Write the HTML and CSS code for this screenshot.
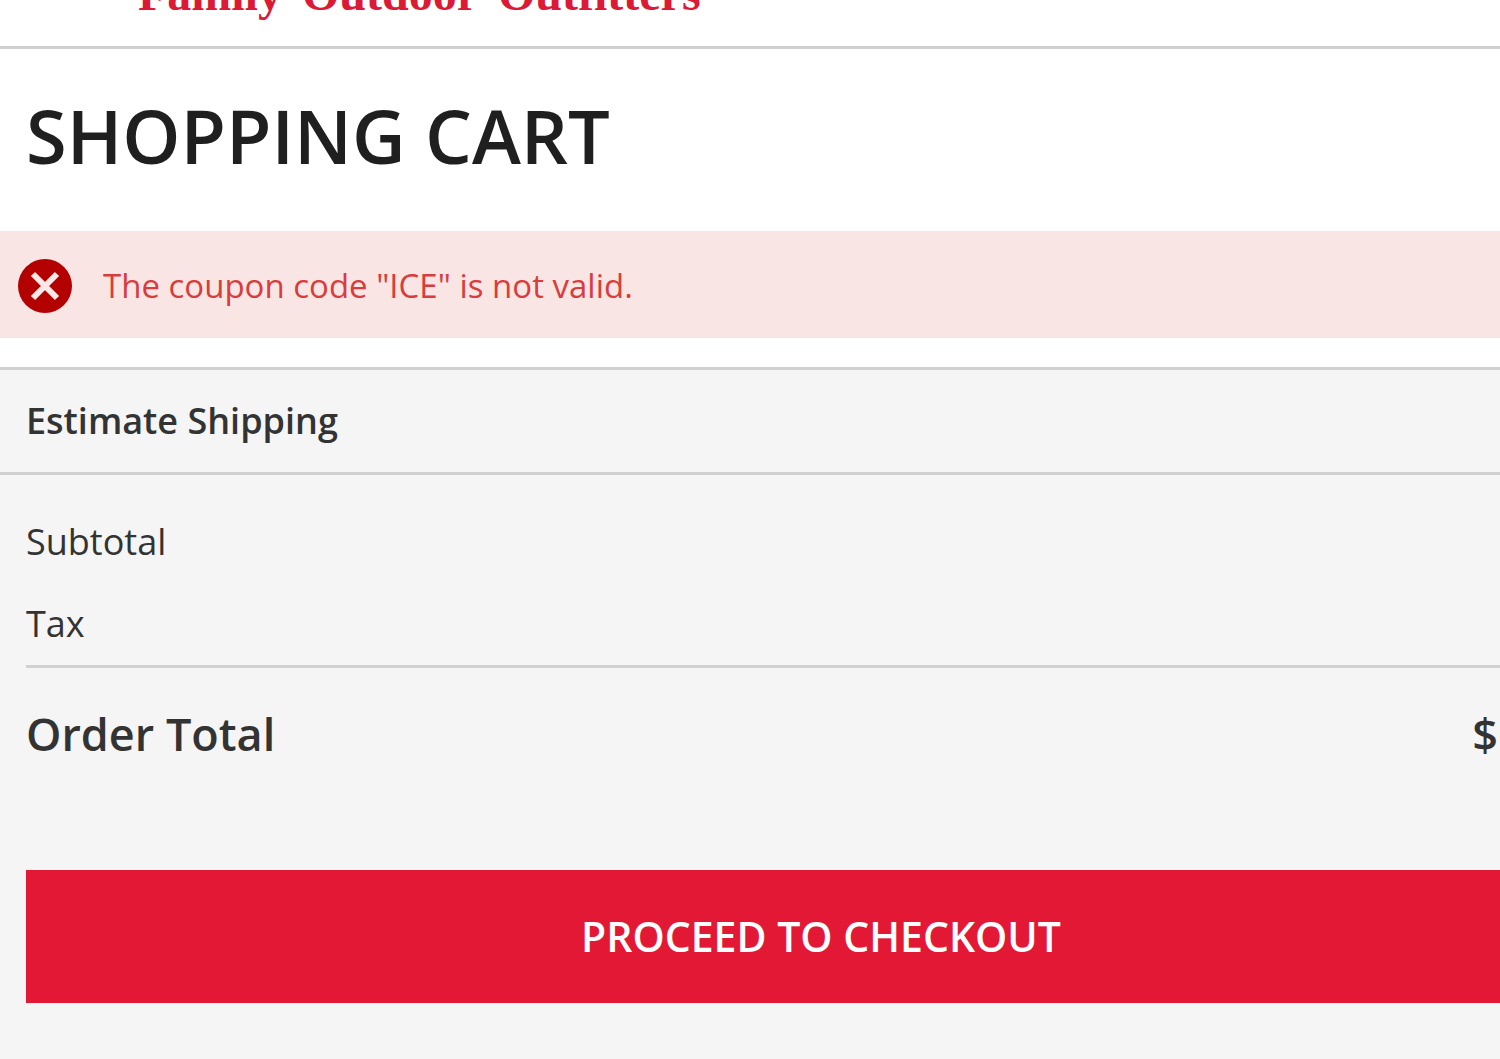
FILE: index.html
```html
<!DOCTYPE html>
<html lang="en">
<head>
<meta charset="utf-8">
<meta name="viewport" content="width=device-width, initial-scale=1">
<title>Shopping Cart</title>
<link rel="stylesheet" href="styles.css">
</head>
<body>
<header class="site-header">
  <a class="brand" href="#"><span>Family</span> <span>Outdoor</span> <span>Outfitters</span></a>
</header>
<main>
  <h1 class="page-title">SHOPPING CART</h1>
  <div class="message" role="alert">
    <svg class="message-icon" viewBox="0 0 54 54" aria-hidden="true">
      <circle cx="27" cy="27" r="27" fill="#b30000"/>
      <path d="M15 15L39 39M39 15L15 39" stroke="#fbe8e7" stroke-width="6" fill="none"/>
    </svg>
    <p class="message-text">The coupon code "ICE" is not valid.</p>
  </div>
  <section class="summary">
    <h2 class="summary-heading">Estimate Shipping</h2>
    <div class="summary-body">
      <table class="totals">
        <tbody>
          <tr><th scope="row">Subtotal</th><td></td></tr>
          <tr><th scope="row">Tax</th><td></td></tr>
        </tbody>
        <tfoot>
          <tr><th scope="row">Order Total</th><td>$</td></tr>
        </tfoot>
      </table>
      <button class="checkout" type="button">PROCEED TO CHECKOUT</button>
    </div>
  </section>
</main>
</body>
</html>
```
FILE: styles.css
```css
* {
  box-sizing: border-box;
}

body {
  margin: 0;
  min-height: 100vh;
  display: flex;
  flex-direction: column;
  background: #fff;
  color: #333;
  font-family: "Open Sans", "Noto Sans", sans-serif;
}

main {
  flex: 1;
  display: flex;
  flex-direction: column;
}

.site-header {
  display: flex;
  align-items: flex-end;
  height: 49px;
  padding: 0 26px 28px 138px;
  border-bottom: 3px solid #d0d0d0;
  overflow: hidden;
}

.brand {
  display: flex;
  gap: 20px;
  color: #dc1a35;
  font: bold 48px/48px "Liberation Serif", serif;
  text-decoration: none;
}

.page-title {
  margin: 0;
  padding: 37px 26px 45px;
  color: #1f1f1f;
  font-size: 74px;
  font-weight: 600;
  line-height: 100px;
}

.message {
  display: flex;
  align-items: center;
  gap: 31px;
  min-height: 107px;
  padding: 2px 18px 0;
  background: #f9e5e4;
}

.message-icon {
  flex: none;
  width: 54px;
  height: 54px;
}

.message-text {
  margin: 0;
  color: #d93c3c;
  font-size: 33px;
  line-height: 48px;
}

.summary {
  flex: 1;
  margin-top: 29px;
  border-top: 3px solid #d0d0d0;
  background: #f5f5f5;
}

.summary-heading {
  margin: 0;
  padding: 27px 26px;
  border-bottom: 3px solid #d0d0d0;
  font-size: 36px;
  font-weight: 600;
  line-height: 48px;
}

.summary-body {
  padding: 26px 0 56px 26px;
}

.totals {
  width: 100%;
  border-collapse: collapse;
  font-size: 36px;
  line-height: 48px;
}

.totals th,
.totals td {
  padding: 17px 0;
  font-weight: 400;
  text-align: left;
}

.totals td {
  padding-right: 2px;
  text-align: right;
}

.totals tfoot {
  border-top: 3px solid #d0d0d0;
  font-size: 45px;
}

.totals tfoot th,
.totals tfoot td {
  padding-top: 42px;
  font-weight: 600;
}

.checkout {
  display: block;
  width: 100%;
  margin-top: 95px;
  padding: 38px 0 38px 116px;
  border: 0;
  background: #e31834;
  color: #fff;
  font: 600 41px/57px "Open Sans", "Noto Sans", sans-serif;
}
```
